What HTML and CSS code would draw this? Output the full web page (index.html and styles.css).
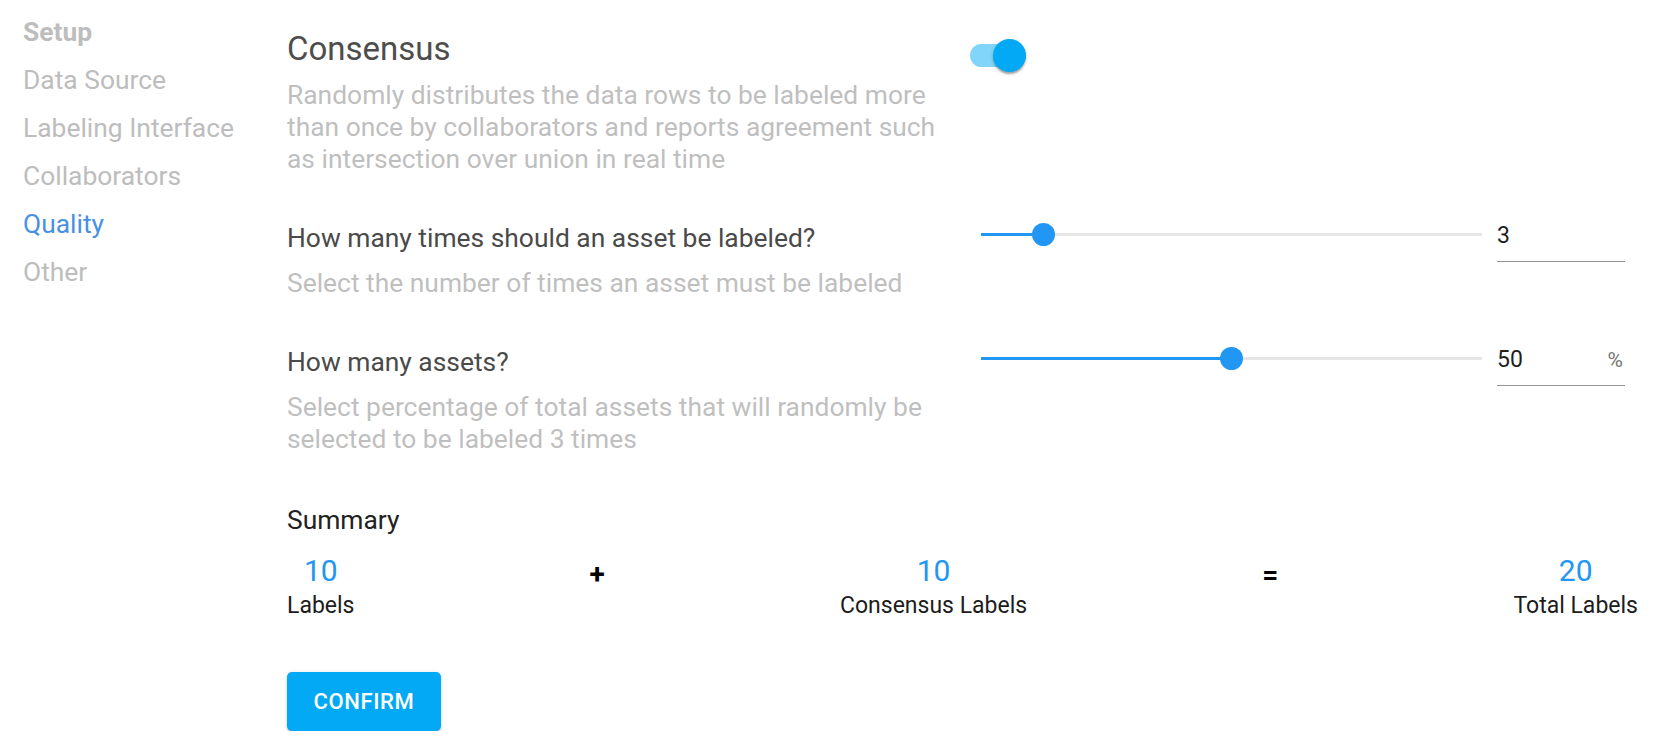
FILE: index.html
```html
<!DOCTYPE html>
<html lang="en">
<head>
<meta charset="utf-8">
<title>Quality - Consensus</title>
<link rel="stylesheet" href="styles.css">
</head>
<body>
<div class="page">
  <nav class="sidebar">
    <div class="nav-item nav-head">Setup</div>
    <div class="nav-item">Data Source</div>
    <div class="nav-item">Labeling Interface</div>
    <div class="nav-item">Collaborators</div>
    <div class="nav-item active">Quality</div>
    <div class="nav-item">Other</div>
  </nav>
  <main class="main">
    <section class="row">
      <div class="text">
        <h2 class="title">Consensus</h2>
        <p class="desc">Randomly distributes the data rows to be labeled more than once by collaborators and reports agreement such as intersection over union in real time</p>
      </div>
      <div class="control">
        <span class="switch"><span class="switch-track"></span><span class="switch-thumb"></span></span>
      </div>
    </section>

    <section class="row row-setting">
      <div class="text">
        <div class="label">How many times should an asset be labeled?</div>
        <p class="desc desc-setting">Select the number of times an asset must be labeled</p>
      </div>
      <div class="control slider-control">
        <div class="slider">
          <div class="rail"></div>
          <div class="fill" style="width:12.5%"></div>
          <div class="thumb" style="left:12.5%"></div>
        </div>
        <div class="field"><span class="value">3</span></div>
      </div>
    </section>

    <section class="row row-setting">
      <div class="text">
        <div class="label">How many assets?</div>
        <p class="desc desc-setting">Select percentage of total assets that will randomly be selected to be labeled 3 times</p>
      </div>
      <div class="control slider-control">
        <div class="slider">
          <div class="rail"></div>
          <div class="fill" style="width:50%"></div>
          <div class="thumb" style="left:50%"></div>
        </div>
        <div class="field"><span class="value">50</span><span class="adorn">%</span></div>
      </div>
    </section>

    <div class="summary-title">Summary</div>
    <div class="totals">
      <div class="total">
        <span class="total-num">10</span>
        <span class="total-label">Labels</span>
      </div>
      <span class="op">+</span>
      <div class="total">
        <span class="total-num">10</span>
        <span class="total-label">Consensus Labels</span>
      </div>
      <span class="op">=</span>
      <div class="total">
        <span class="total-num">20</span>
        <span class="total-label">Total Labels</span>
      </div>
    </div>

    <button class="confirm" type="button">CONFIRM</button>
  </main>
</div>
</body>
</html>
```

FILE: styles.css
```css
html, body {
  margin: 0;
  padding: 0;
  background: #ffffff;
}

body {
  font-family: Roboto, "Noto Sans", "Liberation Sans", sans-serif;
  color: #4a4a4a;
}

.page {
  display: flex;
  align-items: flex-start;
}

/* Sidebar */
.sidebar {
  flex: none;
  width: 264px;
  padding: 8px 0 0 23px;
}

.nav-item {
  font-size: 26.4px;
  line-height: 48px;
  color: #bdbdbd;
  white-space: nowrap;
}

.nav-head {
  font-weight: 700;
}

.nav-item.active {
  color: #4a90e2;
}

/* Main */
.main {
  flex: none;
  width: 1351px;
  padding-top: 29px;
}

.row {
  display: grid;
  grid-template-columns: 670px 1fr;
  align-items: start;
}

.title {
  margin: 0;
  font-size: 33px;
  line-height: 40px;
  font-weight: 400;
  color: #4d4d4d;
}

.desc {
  margin: 10px 0 0;
  font-size: 26.4px;
  line-height: 32px;
  color: #bfbfbf;
}

.row-setting {
  margin-top: 47px;
}

.label {
  font-size: 26.4px;
  line-height: 32px;
  color: #4a4a4a;
}

.desc-setting {
  margin-top: 13px;
}

/* Switch */
.control {
  display: flex;
  align-items: flex-start;
}

.switch {
  position: relative;
  display: block;
  width: 56px;
  height: 33px;
  margin: 10px 0 0 13px;
}

.switch-track {
  position: absolute;
  left: 0;
  right: 0;
  top: 5px;
  height: 23px;
  border-radius: 12px;
  background: #81d4fa;
}

.switch-thumb {
  position: absolute;
  right: 0;
  top: 0;
  width: 33px;
  height: 33px;
  border-radius: 50%;
  background: #03a9f4;
  box-shadow: 0 3px 2px -1px rgba(0,0,0,0.2), 0 2px 2px 0 rgba(0,0,0,0.14), 0 1px 5px 0 rgba(0,0,0,0.12);
}

/* Slider */
.slider-control {
  padding-top: 0;
}

.slider {
  position: relative;
  flex: none;
  width: 501px;
  height: 24px;
  margin-left: 24px;
}

.rail {
  position: absolute;
  left: 0;
  right: 0;
  top: 11px;
  height: 3px;
  background: #e6e6e6;
}

.fill {
  position: absolute;
  left: 0;
  top: 11px;
  height: 3px;
  background: #2196f3;
}

.thumb {
  position: absolute;
  top: 1px;
  width: 23px;
  height: 23px;
  margin-left: -11.5px;
  border-radius: 50%;
  background: #2196f3;
}

.field {
  flex: none;
  display: flex;
  align-items: baseline;
  justify-content: space-between;
  width: 128px;
  margin-left: 15px;
  padding-bottom: 11px;
  border-bottom: 1px solid #949494;
}

.value {
  font-size: 23px;
  line-height: 28px;
  color: #1f1f1f;
}

.adorn {
  font-size: 21px;
  line-height: 28px;
  color: #757575;
  padding-right: 2px;
}

/* Summary */
.summary-title {
  margin-top: 49px;
  font-size: 26.4px;
  line-height: 32px;
  color: #222222;
}

.totals {
  display: flex;
  justify-content: space-between;
  align-items: flex-start;
  margin-top: 17px;
}

.total {
  display: flex;
  flex-direction: column;
  align-items: center;
}

.total-num {
  font-size: 30px;
  line-height: 36px;
  color: #2196f3;
}

.total-label {
  margin-top: 3px;
  font-size: 23px;
  line-height: 28px;
  color: #1c1c1c;
}

.op {
  margin-top: 4px;
  font-size: 28px;
  line-height: 36px;
  font-weight: 700;
  color: #000000;
}

/* Button */
.confirm {
  display: block;
  margin-top: 52px;
  width: 154px;
  height: 59px;
  padding: 0;
  border: 0;
  border-radius: 5px;
  background: #03a9f4;
  color: #ffffff;
  font-family: Roboto, "Noto Sans", sans-serif;
  font-size: 22px;
  font-weight: 500;
  letter-spacing: 0.6px;
  box-shadow: 0 3px 1px -2px rgba(0,0,0,0.2), 0 2px 2px 0 rgba(0,0,0,0.14), 0 1px 5px 0 rgba(0,0,0,0.12);
}
```
